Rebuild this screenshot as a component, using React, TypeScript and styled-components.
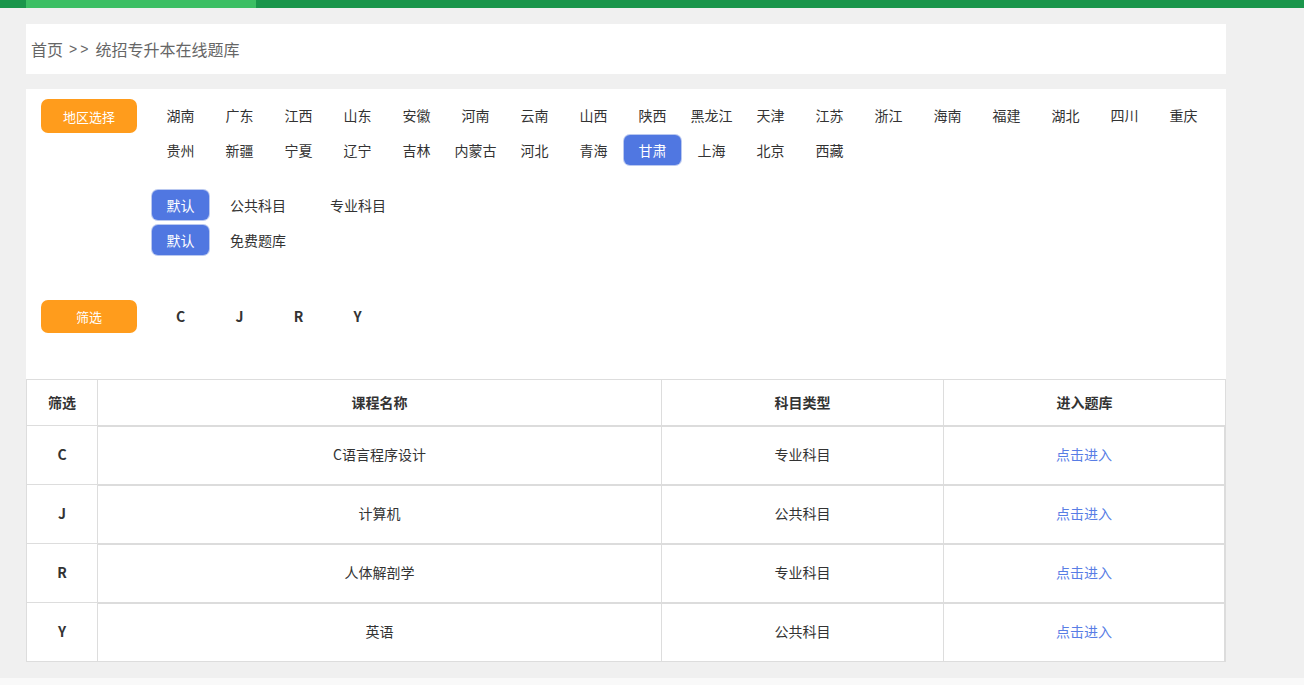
import React from 'react'
import styled, { createGlobalStyle } from 'styled-components'

const GlobalStyle = createGlobalStyle`
	html, body {
		margin: 0;
		padding: 0;
		background: #f0f0f0;
		font-family: 'Microsoft YaHei', 'Noto Sans CJK SC', sans-serif;
		color: #333;
	}
	* {
		box-sizing: border-box;
	}
`

const TopBar = styled.div`
	height: 8px;
	background: #1a964b;
	padding-left: 26px;
`

const TopBarActive = styled.div`
	width: 230px;
	height: 100%;
	background: #3cbf64;
`

const Container = styled.div`
	width: 1200px;
	margin: 16px 0 0 26px;
`

const Breadcrumb = styled.div`
	height: 50px;
	background: #fff;
	display: flex;
	align-items: center;
	padding-left: 5px;
	font-size: 16px;
	color: #666;
`

const Sep = styled.span`
	font-size: 14px;
	letter-spacing: 3px;
	margin: 0 4px 0 6px;
	font-family: 'Liberation Sans', sans-serif;
`

const Panel = styled.div`
	margin-top: 15px;
	background: #fff;
	padding: 10px 0 43px 15px;
`

const Row = styled.div<{ $mt?: number }>`
	display: flex;
	align-items: flex-start;
	margin-top: ${({ $mt }) => $mt ?? 0}px;
`

const OrangeButton = styled.div<{ $h: number }>`
	width: 96px;
	height: ${({ $h }) => $h}px;
	flex-shrink: 0;
	margin-right: 15px;
	border-radius: 7px;
	background: #ff9c1c;
	color: #fff;
	font-size: 13px;
	display: flex;
	align-items: center;
	justify-content: center;
`

const ItemList = styled.div`
	display: flex;
	flex-wrap: wrap;
	flex-shrink: 0;
	width: 1062px;
	padding-top: 1px;
`

const Item = styled.div<{ $active?: boolean; $bold?: boolean }>`
	width: 57px;
	height: 30px;
	margin: 0 2px 5px 0;
	padding-bottom: 1px;
	border-radius: 6px;
	display: flex;
	align-items: center;
	justify-content: center;
	font-size: 14px;
	font-weight: ${({ $bold }) => ($bold ? 700 : 400)};
	background: ${({ $active }) => ($active ? '#5077e1' : 'transparent')};
	color: ${({ $active }) => ($active ? '#fff' : '#333')};
	box-shadow: ${({ $active }) => ($active ? '0 0 0 1px #b9c8f0' : 'none')};
`

const TabBlock = styled.div`
	margin: 20px 0 0 111px;
`

const TabRow = styled.div`
	display: flex;
	align-items: center;
	height: 30px;
	margin-bottom: 5px;
`

const TabActive = styled.div`
	width: 57px;
	height: 30px;
	border-radius: 6px;
	background: #5077e1;
	box-shadow: 0 0 0 1px #b9c8f0;
	color: #fff;
	font-size: 14px;
	display: flex;
	align-items: center;
	justify-content: center;
`

const Tab = styled.div`
	width: 100px;
	padding-left: 21px;
	font-size: 14px;
	color: #333;
`

const Table = styled.div`
	font-size: 14px;
	color: #333;
	background: #fff;
`

const HeadRow = styled.div`
	display: grid;
	grid-template-columns: 71px 564px 282px 282px;
	height: 47px;
	border-top: 1px solid #ddd;
	border-left: 1px solid #ddd;
`

const HeadCell = styled.div`
	display: flex;
	align-items: center;
	justify-content: center;
	padding-bottom: 1px;
	font-weight: 700;
	border-right: 1px solid #ddd;
	border-bottom: 1px solid #ddd;
`

const BodyRow = styled.div`
	display: grid;
	grid-template-columns: 71px 1fr;
	height: 59px;
	border-left: 1px solid #ddd;
`

const KeyCell = styled.div`
	display: flex;
	align-items: center;
	justify-content: center;
	padding-bottom: 2px;
	font-weight: 700;
	border-right: 1px solid #ddd;
	border-bottom: 1px solid #ddd;
	margin-top: -1px;
`

const Group = styled.div`
	display: grid;
	grid-template-columns: 563px 282px 1fr;
	border-top: 2px solid #dcdcdc;
	border-left: 1px solid #ddd;
	border-right: 2px solid #dcdcdc;
	border-bottom: 1px solid #ddd;
	margin-top: -1px;
	margin-left: -1px;
`

const Cell = styled.div<{ $sep?: boolean; $link?: boolean }>`
	display: flex;
	align-items: center;
	justify-content: center;
	padding-bottom: 3px;
	border-left: ${({ $sep }) => ($sep ? '1px solid #ddd' : 'none')};
	color: ${({ $link }) => ($link ? '#587de5' : '#333')};
`

const Footer = styled.div`
	margin-top: 16px;
	height: 20px;
	background: #f9f9f9;
`

const provinces = [
	'湖南', '广东', '江西', '山东', '安徽', '河南', '云南', '山西', '陕西', '黑龙江', '天津', '江苏', '浙江', '海南', '福建', '湖北', '四川', '重庆',
	'贵州', '新疆', '宁夏', '辽宁', '吉林', '内蒙古', '河北', '青海', '甘肃', '上海', '北京', '西藏'
]

const letters = ['C', 'J', 'R', 'Y']

const courses = [
	{ key: 'C', name: 'C语言程序设计', type: '专业科目' },
	{ key: 'J', name: '计算机', type: '公共科目' },
	{ key: 'R', name: '人体解剖学', type: '专业科目' },
	{ key: 'Y', name: '英语', type: '公共科目' }
]

export default function App() {
	return (
		<>
			<GlobalStyle />
			<TopBar>
				<TopBarActive />
			</TopBar>
			<Container>
				<Breadcrumb>
					首页<Sep>&gt;&gt;</Sep>统招专升本在线题库
				</Breadcrumb>
				<Panel>
					<Row>
						<OrangeButton $h={34}>地区选择</OrangeButton>
						<ItemList>
							{provinces.map(p => (
								<Item key={p} $active={p === '甘肃'}>
									{p}
								</Item>
							))}
						</ItemList>
					</Row>
					<TabBlock>
						<TabRow>
							<TabActive>默认</TabActive>
							<Tab>公共科目</Tab>
							<Tab>专业科目</Tab>
						</TabRow>
						<TabRow>
							<TabActive>默认</TabActive>
							<Tab>免费题库</Tab>
						</TabRow>
					</TabBlock>
					<Row $mt={45}>
						<OrangeButton $h={33}>筛选</OrangeButton>
						<ItemList>
							{letters.map(l => (
								<Item key={l} $bold>
									{l}
								</Item>
							))}
						</ItemList>
					</Row>
				</Panel>
				<Table>
					<HeadRow>
						<HeadCell>筛选</HeadCell>
						<HeadCell>课程名称</HeadCell>
						<HeadCell>科目类型</HeadCell>
						<HeadCell>进入题库</HeadCell>
					</HeadRow>
					{courses.map(c => (
						<BodyRow key={c.key}>
							<KeyCell>{c.key}</KeyCell>
							<Group>
								<Cell>{c.name}</Cell>
								<Cell $sep>{c.type}</Cell>
								<Cell $sep $link>
									点击进入
								</Cell>
							</Group>
						</BodyRow>
					))}
				</Table>
			</Container>
			<Footer />
		</>
	)
}
